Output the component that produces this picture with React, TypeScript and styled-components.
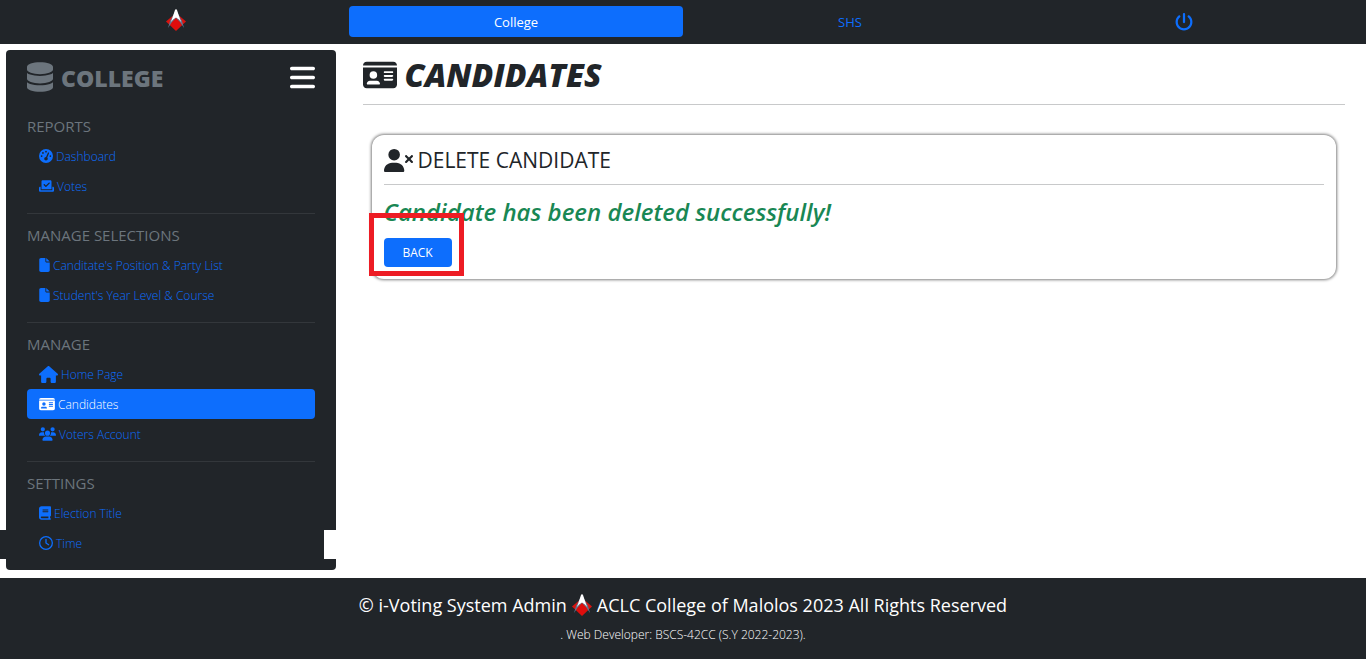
import React from "react";
import styled, { createGlobalStyle } from "styled-components";
import {
  FaBars,
  FaBook,
  FaCheckToSlot,
  FaDatabase,
  FaFile,
  FaGaugeHigh,
  FaHouse,
  FaIdCard,
  FaPowerOff,
  FaRegClock,
  FaUsers,
  FaUserXmark,
} from "react-icons/fa6";

const dark = "#212529";
const blue = "#0d6efd";
const gray = "#6c757d";

const GlobalStyle = createGlobalStyle`
  *, *::before, *::after { box-sizing: border-box; }
  body {
    margin: 0;
    background: #fff;
    color: ${dark};
    font-family: "Open Sans", "Noto Sans", sans-serif;
    font-size: 12px;
  }
  h1, h2, h3, p, ul { margin: 0; padding: 0; }
  ul { list-style: none; }
  a { text-decoration: none; }
  svg { flex: none; }
`;

const Page = styled.div`
  display: flex;
  flex-direction: column;
  min-height: 100vh;
`;

const Icon = styled.span<{ $w: number; $h: number }>`
  display: flex;
  flex: none;

  svg {
    width: ${(p) => p.$w}px;
    height: ${(p) => p.$h}px;
  }
`;

const TopBar = styled.nav`
  display: grid;
  grid-template-columns: repeat(4, 1fr);
  padding: 6px 15px 7px;
  background: ${dark};
`;

const TopLink = styled.a<{ $active?: boolean }>`
  display: flex;
  align-items: center;
  justify-content: center;
  height: 31px;
  border-radius: 4px;
  font-size: 13px;
  color: ${(p) => (p.$active ? "#fff" : blue)};
  background: ${(p) => (p.$active ? blue : "transparent")};
`;

const BrandLink = styled(TopLink)`
  height: 28px;
  padding-right: 12px;
`;

const Columns = styled.div`
  display: grid;
  grid-template-columns: 1fr 3fr;
  flex: 1;
`;

const Sidebar = styled.aside`
  position: relative;
  margin: 6px 6px 8px;
  padding: 12px 21px 11px;
  border-radius: 4px;
  background: ${dark};
`;

const SideHeader = styled.div`
  display: flex;
  align-items: center;
  justify-content: space-between;
  height: 30px;
  margin-bottom: 22px;
`;

const SideTitle = styled.h2`
  display: flex;
  align-items: flex-end;
  gap: 8px;
  font-size: 23px;
  font-weight: 800;
  line-height: 28px;
  color: ${gray};
`;

const MenuButton = styled.button`
  display: flex;
  padding: 0;
  border: 0;
  background: none;
  color: #fff;
`;

const Section = styled.section`
  & + & {
    margin-top: 12px;
    padding-top: 9px;
    border-top: 1px solid #33373b;
  }
`;

const SectionTitle = styled.h3`
  margin-bottom: 2px;
  font-size: 15px;
  font-weight: 400;
  line-height: 25px;
  color: ${gray};
`;

const SideLink = styled.a<{ $active?: boolean }>`
  display: flex;
  align-items: center;
  gap: 3px;
  height: 30px;
  padding: 0 12px;
  border-radius: 4px;
  font-weight: 300;
  color: ${(p) => (p.$active ? "#fff" : blue)};
  background: ${(p) => (p.$active ? blue : "transparent")};
`;

const EdgeStrip = styled.span<{ $side: "left" | "right" }>`
  position: absolute;
  bottom: 11px;
  height: 29px;
  ${(p) =>
    p.$side === "left"
      ? `left: -6px; width: 6px; background: ${dark};`
      : `right: 0; width: 12px; background: #fff;`}
`;

const Main = styled.main`
  padding: 12px 21px;
`;

const PageTitle = styled.h1`
  display: flex;
  align-items: center;
  gap: 8px;
  padding-bottom: 10px;
  border-bottom: 1px solid #c8c9ca;
  font-size: 32px;
  font-style: italic;
  font-weight: 800;
  line-height: 38px;
`;

const Card = styled.section`
  margin: 30px 9px 0;
  padding: 10px 12px 12px;
  border-radius: 12px;
  box-shadow: 0 0 3px 1px #808080;
`;

const CardTitle = styled.h2`
  display: flex;
  align-items: center;
  gap: 5px;
  padding-bottom: 8px;
  border-bottom: 1px solid #c8c9ca;
  font-size: 21px;
  font-weight: 400;
  line-height: 31px;
`;

const Success = styled.p`
  padding: 11px 0 10px;
  color: #198754;
  font-size: 24px;
  font-style: italic;
  font-weight: 600;
  line-height: 32px;
`;

const Highlight = styled.div`
  position: relative;
  width: fit-content;

  &::after {
    content: "";
    position: absolute;
    inset: -25px -12px -9px -15px;
    border: 5px solid #ed1c24;
    pointer-events: none;
  }
`;

const BackButton = styled.button`
  display: block;
  width: 68px;
  height: 29px;
  padding: 0;
  border: 0;
  border-radius: 4px;
  background: ${blue};
  color: #fff;
  font-family: inherit;
  font-size: 12px;
`;

const Footer = styled.footer`
  display: flex;
  flex-direction: column;
  align-items: center;
  gap: 8px;
  padding: 14px 12px 15px;
  background: ${dark};
  color: #fff;
  font-weight: 300;
  line-height: 18px;
`;

const Copyright = styled.p`
  display: flex;
  align-items: center;
  gap: 5px;
  font-size: 18px;
  font-weight: 500;
  line-height: 26px;
`;

const Logo = () => (
  <svg width="20" height="22" viewBox="0 0 20 22" role="img" aria-label="ACLC">
    <path d="M10 4 20 12.500 10 22 0 12.500Z" fill="#d9130f" />
    <path d="M2 19 4 12 10 1 16 12 18 19 14 13 10 9 6 13Z" fill="#64748f" />
    <path d="M5 13 9 1 10 0 11 1 15 13 13 10.500 10 8.500 7 10.500Z" fill="#fff" />
    <path d="M10 9.500 15 15.500 10 21 5 15.500Z" fill="#df0d0d" />
  </svg>
);

const sections = [
  {
    title: "REPORTS",
    links: [
      { label: "Dashboard", icon: <FaGaugeHigh />, w: 14, h: 14 },
      { label: "Votes", icon: <FaCheckToSlot />, w: 15, h: 14 },
    ],
  },
  {
    title: "MANAGE SELECTIONS",
    links: [
      { label: "Canditate's Position & Party List", icon: <FaFile />, w: 11, h: 14 },
      { label: "Student's Year Level & Course", icon: <FaFile />, w: 11, h: 14 },
    ],
  },
  {
    title: "MANAGE",
    links: [
      { label: "Home Page", icon: <FaHouse />, w: 19, h: 17 },
      { label: "Candidates", icon: <FaIdCard />, w: 16, h: 14, active: true },
      { label: "Voters Account", icon: <FaUsers />, w: 17, h: 14 },
    ],
  },
  {
    title: "SETTINGS",
    links: [
      { label: "Election Title", icon: <FaBook />, w: 12, h: 14 },
      { label: "Time", icon: <FaRegClock />, w: 14, h: 14 },
    ],
  },
];

export default function App() {
  return (
    <Page>
      <GlobalStyle />
      <TopBar>
        <BrandLink href="#"><Logo /></BrandLink>
        <TopLink href="#" $active>College</TopLink>
        <TopLink href="#">SHS</TopLink>
        <TopLink href="#" aria-label="Log out"><FaPowerOff size={18} /></TopLink>
      </TopBar>
      <Columns>
        <Sidebar>
          <SideHeader>
            <SideTitle>
              <Icon $w={26} $h={30}><FaDatabase /></Icon>
              COLLEGE
            </SideTitle>
            <MenuButton aria-label="Toggle menu">
              <Icon $w={25} $h={29}><FaBars /></Icon>
            </MenuButton>
          </SideHeader>
          {sections.map((section) => (
            <Section key={section.title}>
              <SectionTitle>{section.title}</SectionTitle>
              <ul>
                {section.links.map((link) => (
                  <li key={link.label}>
                    <SideLink href="#" $active={"active" in link}>
                      <Icon $w={link.w} $h={link.h}>{link.icon}</Icon>
                      {link.label}
                    </SideLink>
                  </li>
                ))}
              </ul>
            </Section>
          ))}
          <EdgeStrip $side="left" />
          <EdgeStrip $side="right" />
        </Sidebar>
        <Main>
          <PageTitle>
            <FaIdCard size={34} />
            CANDIDATES
          </PageTitle>
          <Card>
            <CardTitle>
              <FaUserXmark size={29} />
              DELETE CANDIDATE
            </CardTitle>
            <Success>Candidate has been deleted successfully!</Success>
            <Highlight>
              <BackButton>BACK</BackButton>
            </Highlight>
          </Card>
        </Main>
      </Columns>
      <Footer>
        <Copyright>
          © i-Voting System Admin <Logo /> ACLC College of Malolos 2023 All Rights Reserved
        </Copyright>
        <p>. Web Developer: BSCS-42CC (S.Y 2022-2023).</p>
      </Footer>
    </Page>
  );
}
